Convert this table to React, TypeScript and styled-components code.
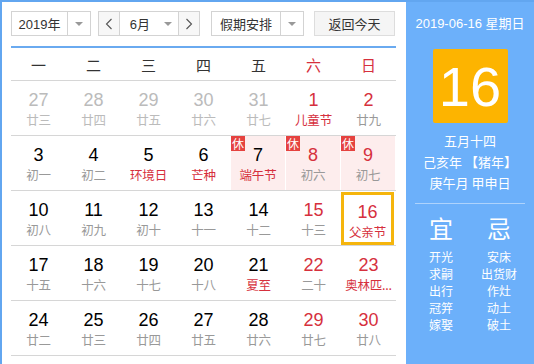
import { FC } from 'react';
import styled, { createGlobalStyle } from 'styled-components';

const GlobalStyle = createGlobalStyle`
	body {
		margin: 0;
		font-family: 'Liberation Sans', 'Noto Sans CJK SC', sans-serif;
	}
`;

type Day = {
	num: number;
	lunar: string;
	other?: boolean;
	redNum?: boolean;
	redLunar?: boolean;
	rest?: boolean;
	selected?: boolean;
};

const weeks: Day[][] = [
	[
		{ num: 27, lunar: '廿三', other: true },
		{ num: 28, lunar: '廿四', other: true },
		{ num: 29, lunar: '廿五', other: true },
		{ num: 30, lunar: '廿六', other: true },
		{ num: 31, lunar: '廿七', other: true },
		{ num: 1, lunar: '儿童节', redNum: true, redLunar: true },
		{ num: 2, lunar: '廿九', redNum: true },
	],
	[
		{ num: 3, lunar: '初一' },
		{ num: 4, lunar: '初二' },
		{ num: 5, lunar: '环境日', redLunar: true },
		{ num: 6, lunar: '芒种', redLunar: true },
		{ num: 7, lunar: '端午节', redLunar: true, rest: true },
		{ num: 8, lunar: '初六', redNum: true, rest: true },
		{ num: 9, lunar: '初七', redNum: true, rest: true },
	],
	[
		{ num: 10, lunar: '初八' },
		{ num: 11, lunar: '初九' },
		{ num: 12, lunar: '初十' },
		{ num: 13, lunar: '十一' },
		{ num: 14, lunar: '十二' },
		{ num: 15, lunar: '十三', redNum: true },
		{ num: 16, lunar: '父亲节', redNum: true, redLunar: true, selected: true },
	],
	[
		{ num: 17, lunar: '十五' },
		{ num: 18, lunar: '十六' },
		{ num: 19, lunar: '十七' },
		{ num: 20, lunar: '十八' },
		{ num: 21, lunar: '夏至', redLunar: true },
		{ num: 22, lunar: '二十', redNum: true },
		// 奥林匹克日, shortened the same way the original cell does
		{ num: 23, lunar: '奥林匹...', redNum: true, redLunar: true },
	],
	[
		{ num: 24, lunar: '廿二' },
		{ num: 25, lunar: '廿三' },
		{ num: 26, lunar: '廿四' },
		{ num: 27, lunar: '廿五' },
		{ num: 28, lunar: '廿六' },
		{ num: 29, lunar: '廿七', redNum: true },
		{ num: 30, lunar: '廿八', redNum: true },
	],
];

const weekdays = ['一', '二', '三', '四', '五', '六', '日'];
const yi = ['开光', '求嗣', '出行', '冠笄', '嫁娶'];
const ji = ['安床', '出货财', '作灶', '动土', '破土'];

const App: FC = () => {
	return (
		<>
			<GlobalStyle />
			<Frame>
				<Main>
					<Toolbar>
						<Select $width={80} $textWidth={56}>
							<SelectText>2019年</SelectText>
							<Caret />
						</Select>
						<MonthGroup>
							<NavButton>
								<Chevron viewBox="0 0 8 12">
									<path d="M6.5 1 L1.5 6 L6.5 11" />
								</Chevron>
							</NavButton>
							<MonthText>6月</MonthText>
							<CaretBox>
								<CaretShape />
							</CaretBox>
							<NavButton $right>
								<Chevron viewBox="0 0 8 12">
									<path d="M1.5 1 L6.5 6 L1.5 11" />
								</Chevron>
							</NavButton>
						</MonthGroup>
						<Select $width={93} $textWidth={69} $left={11}>
							<SelectText>假期安排</SelectText>
							<Caret />
						</Select>
						<TodayButton>返回今天</TodayButton>
					</Toolbar>
					<BlueRule />
					<WeekHeader>
						{weekdays.map((w, i) => (
							<WeekName key={w} $red={i > 4}>
								{w}
							</WeekName>
						))}
					</WeekHeader>
					{weeks.map((week, wi) => (
						<WeekRow key={wi}>
							{week.map((d) => (
								<DayCell key={`${wi}-${d.num}`} $rest={d.rest} $selected={d.selected}>
									{d.rest && <RestBadge>休</RestBadge>}
									<DayNum $other={d.other} $red={d.redNum}>
										{d.num}
									</DayNum>
									<Lunar $other={d.other} $red={d.redLunar}>
										{d.lunar}
									</Lunar>
								</DayCell>
							))}
						</WeekRow>
					))}
				</Main>
				<Side>
					<SideDate>2019-06-16 星期日</SideDate>
					<BigDay>16</BigDay>
					<LunarInfo>
						<div>五月十四</div>
						<div>己亥年 【猪年】</div>
						<div>庚午月 甲申日</div>
					</LunarInfo>
					<SideRule />
					<Almanac>
						<AlmanacCol>
							<AlmanacHead>宜</AlmanacHead>
							{yi.map((t) => (
								<AlmanacItem key={t}>{t}</AlmanacItem>
							))}
						</AlmanacCol>
						<AlmanacCol>
							<AlmanacHead>忌</AlmanacHead>
							{ji.map((t) => (
								<AlmanacItem key={t}>{t}</AlmanacItem>
							))}
						</AlmanacCol>
					</Almanac>
				</Side>
			</Frame>
		</>
	);
};

const Frame = styled.div`
	display: flex;
	width: 534px;
	height: 370px;
	box-sizing: border-box;
	border: 2px solid #62a6f0;
	border-right: none;
	overflow: hidden;
	background: #fff;
`;

const Main = styled.div`
	width: 404px;
	box-sizing: border-box;
	padding: 9px 0 0 9px;
	flex-shrink: 0;
`;

const Toolbar = styled.div`
	display: flex;
	align-items: center;
	height: 25px;
	width: 385px;
`;

const Select = styled.div<{ $width: number; $textWidth: number; $left?: number }>`
	display: flex;
	width: ${(p) => p.$width}px;
	height: 25px;
	box-sizing: border-box;
	border: 1px solid #d3d3d3;
	margin-left: ${(p) => p.$left ?? 0}px;
	& > span:first-child {
		width: ${(p) => p.$textWidth - 1}px;
	}
`;

const SelectText = styled.span`
	display: flex;
	align-items: center;
	justify-content: center;
	font-size: 13px;
	color: #333;
	border-right: 1px solid #d3d3d3;
`;

const Caret = styled.span`
	flex: 1;
	position: relative;
	&::after {
		content: '';
		position: absolute;
		left: 50%;
		top: 10px;
		margin-left: -4px;
		border-left: 4px solid transparent;
		border-right: 4px solid transparent;
		border-top: 4px solid #999;
	}
`;

const MonthGroup = styled.div`
	display: flex;
	width: 102px;
	height: 25px;
	margin-left: 7px;
	box-sizing: border-box;
	border: 1px solid #d3d3d3;
`;

const NavButton = styled.span<{ $right?: boolean }>`
	width: 21px;
	display: flex;
	align-items: center;
	justify-content: center;
	background: #f7f7f7;
	border-${(p) => (p.$right ? 'left' : 'right')}: 1px solid #d3d3d3;
`;

const Chevron = styled.svg`
	width: 8px;
	height: 12px;
	fill: none;
	stroke: #555;
	stroke-width: 1.1;
`;

const MonthText = styled.span`
	width: 40px;
	display: flex;
	align-items: center;
	justify-content: center;
	font-size: 13px;
	color: #333;
`;

const CaretBox = styled.span`
	width: 19px;
	position: relative;
`;

const CaretShape = styled.span`
	position: absolute;
	left: 5px;
	top: 10px;
	border-left: 4px solid transparent;
	border-right: 4px solid transparent;
	border-top: 4px solid #999;
`;

const TodayButton = styled.div`
	width: 81px;
	height: 25px;
	margin-left: 10px;
	box-sizing: border-box;
	border: 1px solid #ddd;
	background: #f5f5f5;
	display: flex;
	align-items: center;
	justify-content: center;
	font-size: 13px;
	color: #333;
`;

const BlueRule = styled.div`
	width: 385px;
	height: 2px;
	margin-top: 10px;
	background: #6aaaf0;
`;

const WeekHeader = styled.div`
	display: grid;
	grid-template-columns: repeat(7, 55px);
	height: 33px;
	border-bottom: 1px solid #d6d6d6;
	width: 385px;
	box-sizing: border-box;
`;

const WeekName = styled.div<{ $red?: boolean }>`
	display: flex;
	align-items: center;
	justify-content: center;
	font-size: 15px;
	color: ${(p) => (p.$red ? '#d6303d' : '#333')};
`;

const WeekRow = styled.div`
	display: grid;
	grid-template-columns: repeat(7, 55px);
	height: 55px;
	width: 385px;
	box-sizing: border-box;
	border-bottom: 1px solid #d6d6d6;
`;

const DayCell = styled.div<{ $rest?: boolean; $selected?: boolean }>`
	position: relative;
	display: flex;
	flex-direction: column;
	align-items: center;
	box-sizing: border-box;
	padding-top: 8px;
	background: ${(p) => (p.$rest ? '#fdeded' : 'transparent')};
	border-right: ${(p) => (p.$rest ? '1px solid #fff' : 'none')};
	${(p) =>
		p.$selected &&
		`
		border: 3px solid #f5b50c;
		margin: 1px 2px 0 0;
		padding-top: 6px;
	`}
`;

const RestBadge = styled.span`
	position: absolute;
	left: 0;
	top: 0;
	width: 14px;
	height: 15px;
	background: #e5423f;
	color: #fff;
	font-size: 12px;
	line-height: 15px;
	text-align: center;
	font-family: 'Noto Sans CJK SC', sans-serif;
`;

const DayNum = styled.div<{ $other?: boolean; $red?: boolean }>`
	font-size: 18px;
	line-height: 22px;
	color: ${(p) => (p.$other ? '#bbb' : p.$red ? '#d6303d' : '#000')};
`;

const Lunar = styled.div<{ $other?: boolean; $red?: boolean }>`
	font-family: 'Noto Sans CJK SC', sans-serif;
	font-size: 12.5px;
	line-height: 18px;
	white-space: nowrap;
	letter-spacing: -0.2px;
	color: ${(p) => (p.$other ? '#bbb' : p.$red ? '#d6303d' : '#999')};
`;

const Side = styled.div`
	flex: 1;
	background: #6cb0fa;
	display: flex;
	flex-direction: column;
	align-items: center;
	color: #fff;
	padding-top: 13px;
`;

const SideDate = styled.div`
	font-size: 13px;
	line-height: 18px;
`;

const BigDay = styled.div`
	width: 75px;
	height: 74px;
	margin-top: 16px;
	background: #fdb400;
	border-radius: 2px;
	display: flex;
	align-items: center;
	justify-content: center;
	font-size: 56px;
	color: #fff;
`;

const LunarInfo = styled.div`
	margin-top: 7px;
	font-family: 'Noto Sans CJK SC', sans-serif;
	font-size: 13px;
	line-height: 21px;
	text-align: center;
`;

const SideRule = styled.div`
	width: 110px;
	height: 1px;
	margin-top: 10px;
	background: rgba(255, 255, 255, 0.45);
`;

const Almanac = styled.div`
	display: flex;
	gap: 18px;
	margin-top: 9px;
	font-family: 'Noto Sans CJK SC', sans-serif;
`;

const AlmanacCol = styled.div`
	width: 40px;
	display: flex;
	flex-direction: column;
	align-items: center;
`;

const AlmanacHead = styled.div`
	font-size: 24px;
	line-height: 30px;
	margin-bottom: 5px;
`;

const AlmanacItem = styled.div`
	font-size: 12px;
	line-height: 17px;
	white-space: nowrap;
`;

export default App;
